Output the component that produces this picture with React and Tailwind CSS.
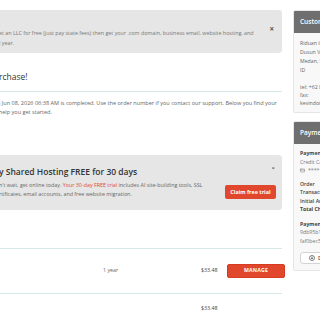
import { CreditCard } from 'lucide-react';

const font = { fontFamily: '"Open Sans", "Liberation Sans", sans-serif' };

function Panel({ title, children }) {
  return (
    <div className="w-[140px] rounded-[2px] overflow-hidden border border-[#e6e6e6] bg-[#f8f8f8]">
      <div className="h-[22px] bg-[#6f6f6f] flex items-center px-[6px] text-[6.5px] font-semibold text-white">
        {title}
      </div>
      {children}
    </div>
  );
}

export default function App() {
  return (
    <div className="w-[320px] h-[320px] overflow-hidden bg-white text-[#666]" style={font}>
      <div className="flex">
        {/* main column */}
        <div className="w-[282px] shrink-0">
          <div className="mt-[10px] relative h-[43px] bg-[#e6e6e6] rounded-r-[3px] pt-[18px] text-[5.35px] leading-[10px] text-[#777] whitespace-nowrap">
            <span className="absolute right-[8px] top-[15px] text-[8px] leading-[8px] font-bold text-[#555]">×</span>
            <div className="-ml-[1px]">et an LLC for free (just pay state fees) then get your .com domain, business email, website hosting, and</div>
            <div className="-ml-[1px]">l year.</div>
          </div>

          <div className="mt-[18px] h-[12px] text-[8.5px] leading-[12px] text-[#333] -ml-[1px]">rchase!</div>
          <div className="mt-[8px] h-px bg-[#d6e8e8]" />

          <div className="mt-[7px] text-[5.55px] leading-[9px] whitespace-nowrap text-[#666]">
            <div className="-ml-[3px]">n Jun 08, 2026 06:38 AM is completed. Use the order number if you contact our support. Below you find your</div>
            <div className="-ml-[6px]">o help you get started.</div>
          </div>

          <div className="mt-[38px] relative h-[55px] bg-[#e6e6e6] rounded-r-[3px] pt-[11px] pr-[6px]">
            <span className="absolute right-[7px] top-[10px] text-[6px] leading-[6px] font-bold text-[#666]">×</span>
            <div className="h-[12px] text-[8.5px] leading-[12px] font-semibold text-[#333] whitespace-nowrap -ml-[1px]">
              y Shared Hosting FREE for 30 days
            </div>
            <div className="mt-[3px] flex items-end justify-between">
              <div className="text-[5.35px] leading-[8.5px] whitespace-nowrap text-[#666]">
                <div className="-ml-[1px]">
                  n't wait, get online today. <span className="text-[#e0492f]">Your 30-day FREE trial</span> includes AI site-building tools, SSL
                </div>
                <div className="-ml-[1px]">rtificates, email accounts, and free website migration.</div>
              </div>
              <button className="w-[51px] h-[14px] shrink-0 rounded-[2px] bg-[#e0472d] text-white text-[5.4px] font-bold mb-[-1px]">
                Claim free trial
              </button>
            </div>
          </div>

          <div className="mt-[38px] h-px bg-[#d6e8e8]" />
          <div className="h-[44px] flex items-center text-[5.3px] text-[#666]">
            <div className="w-[103px] shrink-0" />
            <div className="w-[98px] shrink-0">1 year</div>
            <div className="w-[26px] shrink-0 text-[#444]">$33.48</div>
            <button className="w-[58px] h-[14px] shrink-0 rounded-[2px] bg-[#e0472d] border border-[#d63c22] text-white text-[5.2px] font-bold tracking-[0.2px]">
              MANAGE
            </button>
          </div>
          <div className="h-px bg-[#d6e8e8]" />
          <div className="h-[30px] flex items-center text-[5.3px]">
            <div className="w-[201px] shrink-0" />
            <div className="text-[#444]">$33.48</div>
          </div>
        </div>

        {/* sidebar */}
        <div className="ml-[11px] shrink-0 pt-[10px] flex flex-col gap-[8px] text-[5.2px] whitespace-nowrap">
          <Panel title="Customer Details">
            <div className="px-[6px] pt-[6px] pb-[5px]">
              <div className="leading-[9px] text-[#666]">
                <div>Riduan ilham</div>
                <div>Dusun VI Pasar</div>
                <div>Medan, Sumatera Utara</div>
                <div>ID</div>
              </div>
              <div className="mt-[8px] leading-[8px] text-[#666]">
                <div>tel: +62 812 6543 210</div>
                <div>fax:</div>
                <div>kevindonald@mail.com</div>
              </div>
            </div>
          </Panel>
          <Panel title="Payment Details">
            <div className="px-[6px] pt-[5px] pb-[6px] leading-[8.5px]">
              <div className="font-bold text-[#444]">Payment method</div>
              <div className="text-[#777]">Credit Card</div>
              <div className="flex items-center gap-[3px] text-[#777]">
                <CreditCard size={5} strokeWidth={2.5} />
                <span>**** 4242</span>
              </div>
              <div className="mt-[5px] font-semibold text-[#444]">
                <div>Order</div>
                <div>Transaction</div>
                <div>Initial Amount</div>
                <div className="font-bold">Total Charged</div>
              </div>
              <div className="mt-[6px]">
                <div className="font-bold text-[#444]">Payment ID</div>
                <div className="text-[#777]">9db95b1c3e0a</div>
                <div className="text-[#777]">faf0bec5a21d</div>
              </div>
              <button className="mt-[7px] h-[12px] w-[80px] rounded-[3px] border border-[#d4d4d4] bg-white flex items-center gap-[3px] pl-[8px] text-[#555] font-semibold">
                <svg width="6" height="6" viewBox="0 0 12 12" fill="none" stroke="#555" strokeWidth="1.5">
                  <circle cx="6" cy="6" r="5" />
                  <path d="M6 3v5M4 6l2 2 2-2" />
                </svg>
                <span>Download</span>
              </button>
            </div>
          </Panel>
        </div>
      </div>
    </div>
  );
}
